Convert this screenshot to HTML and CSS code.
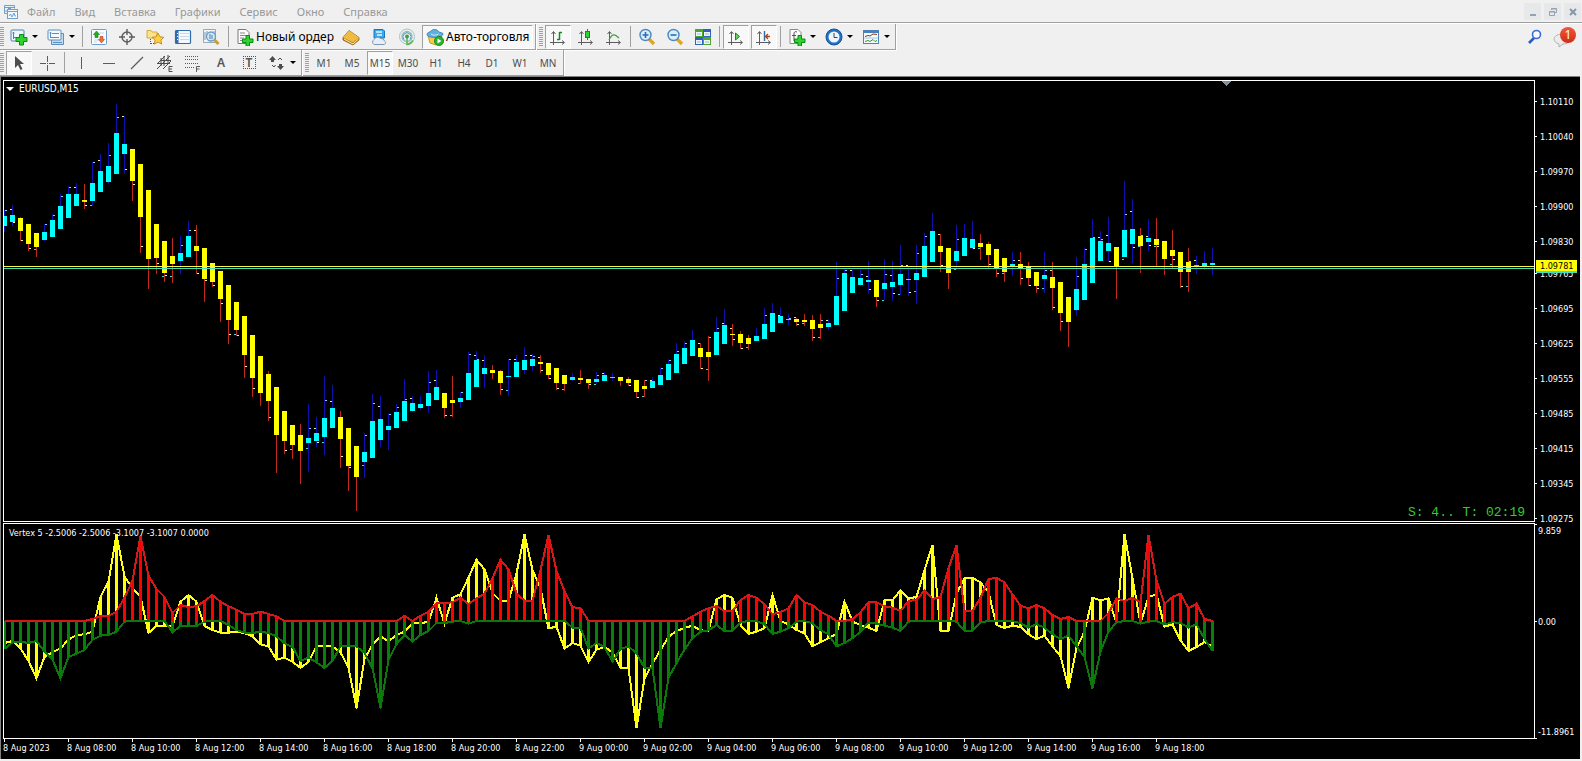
FILE: index.html
```html
<!DOCTYPE html>
<html lang="ru">
<head>
  <meta charset="UTF-8" />
  <meta name="viewport" content="width=device-width, initial-scale=1.0" />
  <title>EURUSD,M15</title>
  <link rel="stylesheet" href="styles.css">
</head>
<body>
  <header>
    <nav class="menu">
      <svg class="app-icon" width="16" height="16" viewBox="0 0 16 16" fill="none" stroke="#6fa0cc">
        <path d="M1.500 1.500h10v3M1.500 1.500v8h3M1 3.500h11" />
        <rect x="4.500" y="5.500" width="10" height="9" fill="#f4f9ff" />
        <path d="M4.500 7.500h10M6 12l1.500-2 1.500 3 2-4 1 3h1" />
        <path d="M3 6v2M5 4.500h3" />
      </svg>
      <a href="#">Файл</a>
      <a href="#">Вид</a>
      <a href="#">Вставка</a>
      <a href="#">Графики</a>
      <a href="#">Сервис</a>
      <a href="#">Окно</a>
      <a href="#">Справка</a>
      <div class="window-buttons">
        <button aria-label="Свернуть"><svg width="10" height="10"><path d="M2 7h6v2H2z" fill="#94a3b3" /></svg></button>
        <button aria-label="Восстановить"><svg width="10" height="10" fill="none" stroke="#94a3b3"><path d="M3.500 3V1.500h5v4H7M3 2h6" /><path d="M1.500 4.500h5v4h-5zM1 5h6" /></svg></button>
        <button aria-label="Закрыть"><svg width="10" height="10"><path d="M2 2l6 6M8 2l-6 6" stroke="#8797a8" stroke-width="2" /></svg></button>
      </div>
    </nav>

    <div class="toolbar">
      <div class="group first">
        <span class="grip"></span>
        <button class="drop" aria-label="Новый график">
          <svg width="18" height="18" viewBox="0 0 18 18">
            <rect x="1" y="2" width="13" height="11" rx="1" fill="#eef6fd" stroke="#4a82b8" />
            <path d="M3.500 4v7M2.500 5h2M5 9.500h6M3 9.500h2" stroke="#4a82b8" fill="none" />
            <path d="M9.500 6.500h4v3h3.500v4h-3.500v3.500h-4v-3.500H6v-4h3.500z" fill="#2fd32f" stroke="#0a8a14" />
          </svg><span class="caret"></span>
        </button>
        <button class="drop" aria-label="Профили">
          <svg width="18" height="18" viewBox="0 0 18 18" fill="#f4f9fe" stroke="#5b8fc0">
            <path d="M4.500 5.500h12v11h-12z" fill="#c4daee" />
            <rect x="1" y="2" width="13" height="10" rx="1" />
            <path d="M3.500 4v6M2.500 5h2M4 9.500h8M5 5.500h7M6 14.500h9" />
          </svg><span class="caret"></span>
        </button>
        <span class="sep"></span>
        <button aria-label="Обзор рынка">
          <svg width="18" height="18" viewBox="0 0 18 18">
            <rect x="1.500" y="1.500" width="15" height="15" rx="1" fill="#fafdff" stroke="#6aa0d0" />
            <path d="M4 12h5M9 5h5M4 14h3" stroke="#c9d4de" />
            <path d="M6.500 3l3 3.500h-1.500v3H5v-3H3.500z" fill="#22b022" stroke="#0f7a14" stroke-width=".6" />
            <path d="M11.500 15l3-3.500H13v-3h-3v3H8.500z" fill="#f0703c" stroke="#b83c14" stroke-width=".6" />
          </svg>
        </button>
        <button aria-label="Окно данных">
          <svg width="18" height="18" viewBox="0 0 18 18" fill="none" stroke="#5c5c5c" stroke-width="1.400">
            <circle cx="9" cy="9" r="5" /><path d="M9 1v6M9 11v6M1 9h6M11 9h6" />
          </svg>
        </button>
        <button aria-label="Навигатор">
          <svg width="18" height="18" viewBox="0 0 18 18">
            <path d="M1 2.500h4l1 1.500h5v6H1z" fill="#fbe488" stroke="#c79a28" stroke-width=".8" />
            <path d="M4.500 11v5M5 15.500h4" stroke="#555" stroke-dasharray="1 1" />
            <path d="M12 5l1.900 3.800 4 .5-3 2.800.8 4-3.700-2-3.700 2 .8-4-3-2.800 4-.5z" fill="#ffcf40" stroke="#b97c10" stroke-width=".8" />
          </svg>
        </button>
        <button aria-label="Терминал">
          <svg width="18" height="18" viewBox="0 0 18 18">
            <rect x="1.500" y="2.500" width="15" height="13" rx="1" fill="#f3f9ff" stroke="#2f6cae" stroke-width="1.200" />
            <path d="M2 3h2.500v12H2z" fill="#2f6cae" />
            <path d="M6 5.500h9M6 8.500h9M6 11.500h9" stroke="#c8d8e8" />
            <path d="M3 5.500h1M3 8.500h1M3 11.500h1" stroke="#fff" />
          </svg>
        </button>
        <button aria-label="Тестер стратегий">
          <svg width="18" height="18" viewBox="0 0 18 18" fill="none">
            <path d="M1.500 1.500h12v13h-12z" fill="#f6f6f6" stroke="#9ba6b0" />
            <path d="M3 4v8M5 3v6M12 3v4" stroke="#7d99b3" />
            <path d="M12.500 12l4 4" stroke="#cf9d24" stroke-width="3" />
            <circle cx="9" cy="8.500" r="4.500" fill="#cfe6f7" stroke="#6d9cc3" stroke-width="1.300" />
            <path d="M8 6v5M10 7v4" stroke="#5581a8" />
          </svg>
        </button>
        <span class="sep"></span>
        <button class="labelled">
          <svg width="18" height="18" viewBox="0 0 18 18">
            <path d="M2 1.500h8l3 3v11H2z" fill="#fcfcfc" stroke="#7b7b7b" />
            <path d="M4 5h5M4 7.500h7M4 10h4M4 12.500h3" stroke="#8a8a8a" />
            <path d="M10 7.500h3.500V11H17v3.500h-3.500V18H10v-3.500H6.500V11H10z" fill="#2fd32f" stroke="#0a8a14" />
          </svg>Новый ордер
        </button>
        <button aria-label="MetaEditor">
          <svg width="18" height="18" viewBox="0 0 18 18">
            <path d="M1 9.500L7 2.500l10 7v2.500l-6 5L1 12z" fill="#b8780f" stroke="#8a560a" stroke-width=".8" />
            <path d="M1 9.500L7 2.500l10 7-6 5z" fill="#f0bc40" />
            <path d="M2 11l9 5 5.500-5" stroke="#fff0b8" fill="none" />
          </svg>
        </button>
        <button aria-label="MQL5 Market">
          <svg width="18" height="18" viewBox="0 0 18 18">
            <path d="M4 1.500h9l1.500 1.500v7H4z" fill="#37aaf0" stroke="#1677bb" />
            <path d="M6 4h6M7 7h5" stroke="#e6f6ff" stroke-width="1.400" />
            <path d="M4 16.500a3 3 0 0 1 0-5 4 4 0 0 1 6.500-1 3.500 3.500 0 0 1 4 2.500 2 2 0 0 1 0 3.500z" fill="#e8eef6" stroke="#8296b0" />
          </svg>
        </button>
        <button aria-label="Сигналы">
          <svg width="18" height="18" viewBox="0 0 18 18" fill="none">
            <circle cx="9" cy="8.500" r="7.500" stroke="#a9c4c8" />
            <circle cx="9" cy="8.500" r="5" stroke="#8fbcc4" stroke-width="1.300" />
            <path d="M6 11.500a4 4 0 1 1 6 0" stroke="#5b94b8" />
            <path d="M9 8.500v8a8 8 0 0 0 6-4" stroke="#5cb85c" stroke-width="1.600" />
            <circle cx="9" cy="8.500" r="2" fill="#3f9f4a" />
          </svg>
        </button>
        <button class="labelled pressed auto">
          <svg width="18" height="18" viewBox="0 0 18 18">
            <path d="M2 8h14l-6 9-6-2z" fill="#f4cc4a" stroke="#b98c1c" stroke-width=".8" />
            <path d="M1 6.500C1 4 4 4.500 5 3s5-2.500 7 0 5 1 5 3-4 3.500-8 3.500S1 8.500 1 6.500z" fill="#5eb0e0" stroke="#2c7cb0" stroke-width=".8" />
            <path d="M5 6c2 1.500 5 1.500 7.500 0" stroke="#d5effc" fill="none" />
            <circle cx="13" cy="13" r="4.600" fill="#27b327" stroke="#12801a" stroke-width=".8" />
            <path d="M11.500 10.500l4 2.500-4 2.500z" fill="#fff" />
          </svg>Авто-торговля
        </button>
      </div>

      <div class="group">
        <span class="grip"></span>
        <button class="pressed" aria-label="Бары">
          <svg width="18" height="18" viewBox="0 0 18 18" fill="none" stroke="#5c5c5c">
            <path d="M4.500 17V4M1 14.500h14M2.500 6l2-2.500 2 2.500M13 12.500l2.500 2-2.500 2" />
            <path d="M10.500 12V4M8 11.500h2.500M10.500 4.500H13" stroke="#128a1c" stroke-width="1.500" />
          </svg>
        </button>
        <button aria-label="Японские свечи">
          <svg width="18" height="18" viewBox="0 0 18 18" fill="none" stroke="#5c5c5c">
            <path d="M4.500 17V4M1 14.500h14M2.500 6l2-2.500 2 2.500M13 12.500l2.500 2-2.500 2" />
            <path d="M10.500 1v11" stroke="#128a1c" /><rect x="8.500" y="3.500" width="4" height="6" fill="#2fd32f" stroke="#128a1c" />
          </svg>
        </button>
        <button aria-label="Линия">
          <svg width="18" height="18" viewBox="0 0 18 18" fill="none" stroke="#5c5c5c">
            <path d="M4.500 17V4M1 14.500h14M2.500 6l2-2.500 2 2.500M13 12.500l2.500 2-2.500 2" />
            <path d="M4 12c3-6 5-7 10-2" stroke="#3aa344" stroke-width="1.300" />
          </svg>
        </button>
        <span class="sep"></span>
        <button aria-label="Увеличить">
          <svg width="18" height="18" viewBox="0 0 18 18" fill="none">
            <path d="M11 11l5 5" stroke="#d9a82c" stroke-width="3.400" />
            <circle cx="7.500" cy="7" r="5.500" fill="#d9eefb" stroke="#4a88c4" stroke-width="1.400" />
            <path d="M4.500 7h6M7.500 4v6" stroke="#2c6cae" stroke-width="1.600" />
          </svg>
        </button>
        <button aria-label="Уменьшить">
          <svg width="18" height="18" viewBox="0 0 18 18" fill="none">
            <path d="M11 11l5 5" stroke="#d9a82c" stroke-width="3.400" />
            <circle cx="7.500" cy="7" r="5.500" fill="#d9eefb" stroke="#4a88c4" stroke-width="1.400" />
            <path d="M4.500 7h6" stroke="#2c6cae" stroke-width="1.600" />
          </svg>
        </button>
        <button aria-label="Упорядочить окна">
          <svg width="18" height="18" viewBox="0 0 18 18">
            <path d="M1 1h8v8H1zM9 9h8v8H9z" fill="#4aa82c" /><path d="M9 1h8v8H9zM1 9h8v8H1z" fill="#2f62b8" />
            <path d="M2 4h6v4H2zM10 4h6v4h-6zM2 12h6v4H2zM10 12h6v4h-6z" fill="#eef5fb" />
            <path d="M3 6h4M11 6h4M3 14h4M11 14h4" stroke="#9fb8cc" />
          </svg>
        </button>
        <span class="sep"></span>
        <button class="pressed" aria-label="Автопрокрутка">
          <svg width="18" height="18" viewBox="0 0 18 18" fill="none" stroke="#5c5c5c">
            <path d="M4.500 17V4M1 14.500h14M2.500 6l2-2.500 2 2.500M13 12.500l2.500 2-2.500 2" />
            <path d="M8.500 5v7l4-3.500z" fill="#5ed65e" stroke="#128a1c" />
          </svg>
        </button>
        <button class="pressed" aria-label="Сдвиг графика">
          <svg width="18" height="18" viewBox="0 0 18 18" fill="none" stroke="#5c5c5c">
            <path d="M4.500 17V4M1 14.500h14M2.500 6l2-2.500 2 2.500M13 12.500l2.500 2-2.500 2" />
            <path d="M9.500 3v10" stroke="#2a6aa8" stroke-width="1.400" /><path d="M15 8.500h-4M13 6l-2.500 2.500L13 11" stroke="#b8400c" stroke-width="1.300" />
          </svg>
        </button>
        <span class="sep"></span>
        <button class="drop" aria-label="Индикаторы">
          <svg width="18" height="18" viewBox="0 0 18 18">
            <path d="M2 1.500h8l3 3v11H2z" fill="#fcfcfc" stroke="#8a8a8a" />
            <path d="M9 4c-2-1-3 0-3 2v7M4 7.500h4" stroke="#555" fill="none" />
            <path d="M10 7.500h3.500V11H17v3.500h-3.500V18H10v-3.500H6.500V11H10z" fill="#2fd32f" stroke="#0a8a14" />
          </svg><span class="caret"></span>
        </button>
        <button class="drop" aria-label="Периоды">
          <svg width="18" height="18" viewBox="0 0 18 18">
            <circle cx="9" cy="9" r="8" fill="#2272c4" stroke="#174f90" /><circle cx="9" cy="9" r="5.500" fill="#eef6fd" />
            <path d="M9 5v4.500h3.500" stroke="#444" fill="none" />
          </svg><span class="caret"></span>
        </button>
        <button class="drop" aria-label="Шаблоны">
          <svg width="18" height="18" viewBox="0 0 18 18" fill="none">
            <rect x="1.500" y="2.500" width="15" height="13" fill="#f7fbff" stroke="#4a82b8" />
            <path d="M2 4h14" stroke="#4a82b8" stroke-width="2" /><path d="M2 10h14" stroke="#a9c4dc" />
            <path d="M3 8.500l3-1 2 .5 3-2 4 .5" stroke="#8a3a1c" /><path d="M3 13.500l3-1 2 1 3-2 2 2 2-1" stroke="#28963a" />
          </svg><span class="caret"></span>
        </button>
      </div>

      <div class="right-tools">
        <button aria-label="Поиск">
          <svg width="16" height="16" viewBox="0 0 16 16" fill="none">
            <path d="M7 9l-5 5" stroke="#2c5cc0" stroke-width="2.600" /><circle cx="9.500" cy="5.500" r="4" fill="#f6faff" stroke="#3a6cd0" stroke-width="1.600" />
          </svg>
        </button>
        <button class="chat" aria-label="Сообщения">
          <svg width="18" height="18" viewBox="0 0 18 18"><path d="M9 4c5 0 8 2 8 5s-3 5-7 5l-4 3v-3c-3-1-5-3-5-5s3-5 8-5z" fill="#ececec" stroke="#b0b0b0" /></svg>
          <span class="badge">1</span>
        </button>
      </div>
    </div>

    <div class="toolbar">
      <div class="group first">
        <span class="grip"></span>
        <button class="pressed" aria-label="Курсор"><svg width="18" height="18"><path d="M5 2v12l3-3 2.500 5 2-1-2.500-5h4z" fill="#4c4c4c" /></svg></button>
        <button aria-label="Перекрестие"><svg width="18" height="18"><path d="M9.500 2v6M9.500 11v6M2 9.500h6M11 9.500h6M9 9.500h1" stroke="#5c5c5c" /></svg></button>
        <span class="sep"></span>
        <button aria-label="Вертикальная линия"><svg width="18" height="18"><path d="M9.500 3v12" stroke="#5c5c5c" /></svg></button>
        <button aria-label="Горизонтальная линия"><svg width="18" height="18"><path d="M3 9.500h12" stroke="#5c5c5c" /></svg></button>
        <button aria-label="Трендовая линия"><svg width="18" height="18"><path d="M3 15L15 3" stroke="#5c5c5c" stroke-width="1.300" /></svg></button>
        <button aria-label="Равноудаленный канал">
          <svg width="18" height="18" fill="none" stroke="#4c4c4c"><path d="M1 15L14 2M1 10l8-8M7 15l8-8M2 9.500h12M4 6.500h11M5 4v8M8 2v10M12 1v8" /><path d="M16.500 12.500H13v5h3.500M13 15h3" /></svg>
        </button>
        <button aria-label="Линии Фибоначчи">
          <svg width="18" height="18" fill="none" stroke="#5c5c5c"><path d="M1 2.500h14M1 5.500h14M1 9.500h14M1 13.500h9" stroke-dasharray="1 1" /><path d="M16 12.500h-3.500V18M12.500 15h3" /></svg>
        </button>
        <button class="glyph">A</button>
        <button class="glyph" aria-label="Текстовая метка"><span class="label-icon">T</span></button>
        <button class="drop" aria-label="Стрелки">
          <svg width="18" height="18"><path d="M1 6l3.500-4L8 6H6v2H3V6zM9 12h2v-2h3v2h2l-3.500 4z" fill="#4c4c4c" /><path d="M4 11l2 2 1.500-2M10 6l2-2 2 2" stroke="#4c4c4c" fill="none" /></svg><span class="caret"></span>
        </button>
      </div>
      <div class="group periods">
        <span class="grip"></span>
        <button>M1</button>
        <button>M5</button>
        <button class="pressed">M15</button>
        <button>M30</button>
        <button>H1</button>
        <button>H4</button>
        <button>D1</button>
        <button>W1</button>
        <button>MN</button>
      </div>
    </div>
  </header>

  <main class="chart">
    <section class="pane price-pane">
      <div class="plot">
        <svg id="price" class="canvas"></svg>
        <h1 class="pane-title symbol"><span class="caret"></span>EURUSD,M15</h1>
        <p class="timer">S: 4.. T: 02:19</p>
      </div>
      <svg id="priceAxis" class="axis"></svg>
    </section>
    <section class="pane indicator-pane">
      <div class="plot">
        <svg id="indicator" class="canvas"></svg>
        <h2 class="pane-title">Vertex 5 -2.5006 -2.5006 -3.1007 -3.1007 0.0000</h2>
      </div>
      <svg id="indicatorAxis" class="axis"></svg>
    </section>
    <div class="time-axis" id="timeAxis"></div>
  </main>

  <script src="script.js"></script>
</body>
</html>
```

FILE: styles.css
```css
* {
  box-sizing: border-box;
}

body {
  margin: 0;
  min-height: 100vh;
  display: flex;
  flex-direction: column;
  background: #f0f0f0;
  font-family: "Noto Sans", "Open Sans", sans-serif;
  font-size: 12px;
  color: #000;
}

button {
  font: inherit;
  color: inherit;
  border: 1px solid transparent;
  background: none;
  padding: 0;
  display: flex;
  align-items: center;
  justify-content: center;
}

svg {
  display: block;
  flex: none;
}

/* Menu */
.menu {
  height: 24px;
  display: flex;
  align-items: center;
  padding-left: 3px;
  border-bottom: 1px solid #fff;
  box-shadow: inset 0 -1px #a0a0a0;
  font-size: 11px;
}

.app-icon {
  margin-right: 8px;
}

.menu a {
  color: #989898;
  text-decoration: none;
  margin-right: 19px;
}

.window-buttons {
  margin-left: auto;
  display: flex;
  gap: 3px;
  padding-right: 1px;
}

.window-buttons button {
  width: 17px;
  height: 17px;
  background: #e6e8ea;
}

/* Toolbars */
.toolbar {
  height: 26px;
  display: flex;
}

.group {
  display: flex;
  align-items: center;
  gap: 2px;
  padding: 0 2px;
  margin-right: 1px;
  border-right: 1px solid #a0a0a0;
  border-bottom: 1px solid #a0a0a0;
  box-shadow: 1px 1px #fff;
}

.group.first {
  padding-left: 0;
}

.group button {
  width: 26px;
  height: 24px;
}

.group .drop {
  width: 35px;
  justify-content: flex-start;
  padding-left: 3px;
  gap: 4px;
}

.group .labelled {
  width: 104px;
  gap: 2px;
  justify-content: flex-start;
  padding-left: 3px;
  white-space: nowrap;
}

.group .auto {
  width: 111px;
}

.group .pressed {
  border-color: #a0a0a0 #fff #fff #a0a0a0;
  background: #f8f8f8;
}

.grip {
  width: 4px;
  height: 20px;
  background: repeating-linear-gradient(#a0a0a0 0 1px, #f0f0f0 1px 2px);
}

.sep {
  width: 1px;
  height: 21px;
  margin: 0 1px 0 2px;
  background: #a0a0a0;
}

.group + .group .sep {
  margin: 0 1px;
}

.caret {
  border: 3px solid transparent;
  border-top-color: #000;
  border-bottom-width: 0;
}

.glyph {
  font-weight: 600;
  color: #555;
}

.label-icon {
  width: 13px;
  height: 13px;
  line-height: 12px;
  border: 1px dotted #555;
}

.periods {
  font-size: 10px;
  color: #4c4c4c;
}

.right-tools {
  margin-left: auto;
  display: flex;
  align-items: center;
  gap: 8px;
  padding-right: 4px;
}

.chat {
  position: relative;
  width: 26px;
  height: 24px;
  padding-top: 4px;
  justify-content: flex-start;
}

.badge {
  position: absolute;
  top: 1px;
  right: 1px;
  width: 16px;
  height: 16px;
  border-radius: 50%;
  background: linear-gradient(#f0583c, #d02c18);
  color: #fff;
  line-height: 16px;
}

/* Chart */
.chart {
  flex: 1;
  display: flex;
  flex-direction: column;
  margin: 0 2px 2px 0;
  padding: 3px 0 0 2px;
  background: #000;
  border-left: 1px solid #808080;
  border-top: 1px solid #808080;
  color: #fff;
  font-family: "DejaVu Sans Condensed", "DejaVu Sans", sans-serif;
  font-size: 9px;
}

.pane {
  display: flex;
}

.price-pane {
  height: 442px;
  margin-bottom: 1px;
}

.indicator-pane {
  height: 216px;
}

.plot {
  position: relative;
  flex: 1;
  min-width: 0;
  border: 1px solid #fff;
}

.canvas {
  width: 100%;
  height: 100%;
  shape-rendering: crispEdges;
}

.axis {
  width: 45px;
  height: 100%;
  overflow: visible;
  fill: #fff;
}

.pane-title {
  position: absolute;
  top: 3px;
  left: 5px;
  margin: 0;
  display: flex;
  align-items: center;
  gap: 5px;
  font-size: 9px;
  line-height: 12px;
  font-weight: normal;
}

.pane-title.symbol {
  top: 2px;
  left: 2px;
  font-size: 10px;
}

.pane-title .caret {
  border-width: 4px 4px 0;
  border-top-color: #fff;
}

.timer {
  position: absolute;
  right: 9px;
  bottom: 0;
  margin: 0;
  color: #32cd32;
  font-family: "Liberation Mono", monospace;
  font-size: 13px;
  line-height: 16px;
}

.time-axis {
  display: flex;
  overflow: hidden;
}

.time-axis span {
  flex: none;
  width: 64px;
  line-height: 12px;
  white-space: nowrap;
}

.time-axis span::before {
  content: "";
  display: block;
  width: 1px;
  height: 3px;
  margin-left: 1px;
  background: #fff;
}
```

FILE: script.js
```js
const BAR_STEP = 8;
const PRICE_TOP = 81;
const YELLOW = "#ffff00";
const AQUA = "#00ffff";

// direction (1 up, -1 down), high, body top, body bottom, low, open tick, close tick
const candles = [
  [1,210,216,226,232,0,210],[1,205,215,222,226,209,222],[-1,217,218,231,241,0,240],[-1,224,224,244,251,0,248],
  [-1,233,233,247,257,249,0],[1,224,232,240,241,0,224],[1,214,220,237,237,0,215],[1,194,206,229,229,0,196],
  [1,186,194,218,218,0,187],[1,183,194,206,206,187,0],[-1,184,200,202,209,201,205],[1,162,183,201,206,205,162],
  [1,154,171,192,192,160,0],[1,143,166,182,184,0,155],[1,104,133,174,174,0,117],[1,116,144,154,174,116,169],
  [-1,149,149,181,201,0,184],[-1,164,164,217,253,0,246],[-1,190,190,259,289,0,0],[-1,224,224,258,274,0,263],
  [-1,241,241,273,282,276,275],[-1,238,256,264,283,276,0],[1,236,253,261,274,0,245],[1,221,236,257,257,0,230],
  [-1,225,246,251,274,230,273],[-1,248,248,279,302,0,280],[-1,263,263,282,287,0,285],[-1,271,271,299,322,0,303],
  [-1,285,285,320,344,0,334],[-1,302,302,330,336,334,335],[-1,316,316,355,378,0,366],[-1,335,335,378,397,0,388],
  [-1,356,356,393,406,0,0],[-1,371,374,401,421,0,417],[-1,387,387,435,473,0,0],[-1,411,411,441,454,0,450],
  [-1,425,425,445,459,449,0],[-1,424,435,451,484,0,0],[1,404,438,443,472,448,428],[1,417,433,441,447,428,442],
  [1,376,418,437,455,442,400],[1,385,408,428,428,401,0],[-1,411,417,439,468,0,456],[-1,428,428,466,491,0,467],
  [-1,446,446,477,511,0,0],[1,433,452,462,478,465,435],[1,394,421,458,458,0,403],[1,396,419,440,447,406,0],
  [1,413,426,430,450,0,414],[1,404,412,428,428,0,407],[1,379,401,421,421,0,399],[1,396,403,411,412,398,0],
  [1,396,404,408,410,0,0],[1,371,393,406,413,0,382],[1,370,387,400,400,380,0],[-1,393,393,408,418,0,415],
  [-1,376,400,403,417,415,0],[1,392,398,402,408,0,392],[1,352,373,400,400,0,354],[1,351,360,387,387,355,359],
  [1,355,368,374,388,360,0],[-1,365,370,373,379,0,0],[-1,370,371,383,395,0,389],[1,359,376,377,396,390,359],
  [1,355,362,377,377,359,0],[1,347,360,370,374,0,355],[1,354,359,366,371,355,356],[-1,355,362,364,373,357,370],
  [-1,363,363,375,379,0,378],[-1,368,368,383,390,0,388],[-1,375,375,384,391,389,0],[1,373,377,380,381,0,0],
  [-1,370,378,380,384,383,0],[-1,379,379,383,389,0,384],[1,372,379,382,384,384,375],[1,372,375,381,381,373,0],
  [1,373,377,378,381,0,0],[-1,377,377,381,386,0,0],[-1,377,379,383,386,0,385],[-1,380,380,392,398,0,397],
  [-1,380,386,389,397,396,380],[1,377,381,388,388,380,0],[1,367,375,385,385,0,368],[1,359,364,380,380,0,360],
  [1,343,354,373,373,0,351],[1,341,348,364,364,0,343],[1,330,340,356,356,0,0],[-1,343,348,357,369,343,368],
  [-1,336,352,357,381,369,337],[1,317,332,355,355,0,328],[1,309,325,344,344,323,0],[-1,324,334,335,346,328,339],
  [-1,331,334,343,349,0,348],[-1,335,338,344,350,347,0],[1,328,336,341,341,0,0],[1,308,324,339,339,0,315],
  [1,303,313,332,332,0,0],[1,307,316,323,323,315,0],[1,314,319,320,325,0,318],[-1,318,319,322,326,317,324],
  [-1,314,320,322,326,323,0],[-1,315,320,329,341,0,337],[-1,314,324,328,339,337,320],[1,319,323,327,330,320,0],
  [1,262,296,325,325,0,278],[1,269,273,311,311,0,270],[1,270,277,293,293,270,0],[1,270,278,285,286,0,274],
  [1,261,280,282,294,276,289],[-1,280,280,297,307,0,300],[1,259,283,289,300,300,274],[1,261,282,287,301,275,293],
  [1,245,274,285,295,294,265],[1,266,279,280,296,265,292],[1,245,273,280,304,291,253],[1,233,246,277,277,0,236],
  [1,213,231,262,262,0,0],[-1,234,246,252,272,234,265],[-1,248,248,273,289,0,0],[1,225,251,261,270,269,239],
  [1,224,238,256,256,0,0],[1,221,239,248,249,0,248],[-1,234,243,247,260,248,0],[-1,242,244,255,268,0,264],
  [-1,249,249,268,277,0,273],[-1,258,258,272,282,273,0],[1,252,264,267,276,0,260],[-1,252,264,268,285,260,278],
  [-1,262,267,278,286,0,285],[-1,272,272,286,293,0,288],[1,252,275,279,293,288,270],[-1,262,277,288,310,270,307],
  [-1,282,282,313,331,0,321],[-1,297,297,322,347,0,0],[1,257,289,310,316,0,276],[1,248,264,300,300,0,249],
  [1,219,238,283,283,0,237],[1,231,241,261,261,237,239],[1,217,243,251,262,235,261],[-1,247,247,267,299,0,0],
  [1,181,230,257,257,259,214],[1,199,229,244,263,211,247],[-1,228,236,246,273,246,235],[1,219,238,242,251,236,245],
  [-1,218,239,245,266,246,246],[-1,241,241,259,275,0,0],[-1,230,250,256,268,264,259],[-1,252,252,272,288,0,286],
  [-1,248,262,272,292,286,261],[1,256,265,267,274,260,0],[1,251,263,266,270,0,0],[1,248,263,265,275,0,0]
];

// Indicator buffers, three levels to a pixel, zero line at ZERO
const ZERO = 318;
const fast = [
  384,378,400,438,490,426,412,400,374,360,358,350,245,200,58,184,220,246,354,333,333,333,260,240,260,333,345,353,353,350,
  354,364,388,394,434,428,440,459,440,394,394,394,412,458,580,432,390,364,379,360,350,324,324,321,248,326,248,238,188,134,
  163,234,258,258,175,58,165,220,340,335,401,384,392,441,404,396,412,459,459,640,490,446,405,366,348,339,332,346,348,253,
  240,248,330,357,350,340,240,318,328,345,355,394,382,370,356,260,320,330,338,348,256,256,226,250,246,165,90,348,348,235,
  190,189,202,232,330,339,332,336,358,372,362,394,424,520,400,350,248,256,250,324,58,190,326,246,238,335,328,376,408,396,
  382,394
];
const upper = [
  318,318,318,318,318,318,318,318,318,318,318,312,303,302,290,248,196,62,182,222,246,294,270,276,274,258,240,260,274,284,
  297,297,290,297,304,318,318,318,318,318,318,318,318,318,318,318,318,318,318,318,303,318,302,290,264,264,262,248,267,250,
  236,190,134,163,236,257,258,165,60,168,228,277,279,318,318,318,318,318,318,318,318,318,318,318,318,318,304,290,280,273,
  288,288,255,240,248,268,298,291,280,240,262,270,290,302,318,318,312,292,262,262,274,278,288,258,255,226,252,246,160,90,
  288,288,248,192,189,202,238,272,280,270,280,300,312,306,318,318,318,318,294,250,258,248,262,60,196,266,246,236,280,266,
  312,318
];
const lower = [
  402,382,380,384,378,410,434,490,426,416,405,374,362,360,350,320,318,318,318,318,318,352,333,333,333,320,318,318,330,345,
  353,354,350,354,364,385,396,438,428,442,459,438,394,394,394,414,460,580,435,388,360,380,360,348,324,324,320,318,326,318,
  318,318,318,318,318,318,318,318,318,318,318,338,338,401,384,396,440,402,394,415,459,459,640,488,445,404,370,350,346,330,
  348,348,322,318,318,328,357,350,340,320,318,325,346,358,394,384,370,350,322,326,332,338,348,320,318,318,318,318,318,320,
  348,348,322,318,318,318,318,325,338,328,338,358,372,362,394,426,520,410,350,322,318,318,326,320,318,328,322,324,338,328,
  372,408
];

function add(parent, name, attrs, text) {
  const el = document.createElementNS("http://www.w3.org/2000/svg", name);
  for (const key in attrs) el.setAttribute(key, attrs[key]);
  if (text) el.textContent = text;
  parent.appendChild(el);
  return el;
}

function rect(parent, x, y, width, height, fill) {
  add(parent, "rect", { x, y, width, height, fill });
}

function drawPrice() {
  const svg = document.getElementById("price");
  const g = add(svg, "g", { transform: `translate(0 ${-PRICE_TOP})` });

  candles.forEach(([dir, high, top, bottom, low, open, close], i) => {
    const x = i * BAR_STEP;
    rect(g, x, high, 1, low - high, dir > 0 ? "#1010b0" : "#c0281c");
    rect(g, x - 2, top, 5, bottom - top, dir > 0 ? AQUA : YELLOW);
    if (open) rect(g, x - 2, open, 2, 1, open > top ? "#40e0d0" : "#f0f080");
    if (close) rect(g, x + 1, close, 2, 1, close > top ? "#ffffa0" : "#80d0ff");
  });

  rect(g, 0, 266, "100%", 1, "#fff44c");
  rect(g, 0, 268, "100%", 1, "#40e0c0");
  add(g, "path", { d: "M1217 81h10l-5 5z", fill: "#8090a0" });
}

function drawPriceAxis() {
  const svg = document.getElementById("priceAxis");
  const prices = [1.1011, 1.1004, 1.0997, 1.099, 1.0983, 1.09765, 1.09695, 1.09625, 1.09555, 1.09485, 1.09415, 1.09345, 1.09275];
  prices.forEach((price) => {
    const y = Math.floor((1.1011 - price) * 50000 + 0.1) + 21;
    rect(svg, 0, y, 2, 1, "#fff");
    add(svg, "text", { x: 5, y: y + 4 }, price.toFixed(5));
  });
  rect(svg, 1, 180, 41, 13, "#40e0d0");
  rect(svg, 1, 180, 41, 11, YELLOW);
  add(svg, "text", { x: 5, y: 189, fill: "#000" }, "1.09781");
}

function drawSeries(g, values, fill, line) {
  values.forEach((v, i) => {
    rect(g, i * BAR_STEP - 1, Math.min(v, ZERO) / 3, 3, Math.abs(v - ZERO) / 3, fill);
  });
  const points = values.map((v, i) => `${i * BAR_STEP + 0.5},${v / 3}`).join(" ");
  add(g, "polyline", { points, fill: "none", stroke: line, "stroke-width": 2 });
}

function drawIndicator() {
  const g = add(document.getElementById("indicator"), "g", { transform: "translate(0 -9)" });
  drawSeries(g, fast, "#ffff00", "#ffff18");
  drawSeries(g, upper, "#ff0000", "#d81818");
  drawSeries(g, lower, "#088008", "#0c780c");

  const axis = document.getElementById("indicatorAxis");
  [["9.859", 1, 11], ["0.00", 98, 102], ["-11.8961", 215, 212]].forEach(([label, tick, y]) => {
    rect(axis, 0, tick, 2, 1, "#fff");
    add(axis, "text", { x: 3, y }, label);
  });
}

function drawTimeAxis() {
  const axis = document.getElementById("timeAxis");
  for (let i = 0; i < 19; i++) {
    const hour = 6 + i * 2;
    const label = document.createElement("span");
    label.textContent = i === 0 ? "8 Aug 2023" : `${hour < 24 ? 8 : 9} Aug ${String(hour % 24).padStart(2, "0")}:00`;
    axis.appendChild(label);
  }
}

drawPrice();
drawPriceAxis();
drawIndicator();
drawTimeAxis();
```
